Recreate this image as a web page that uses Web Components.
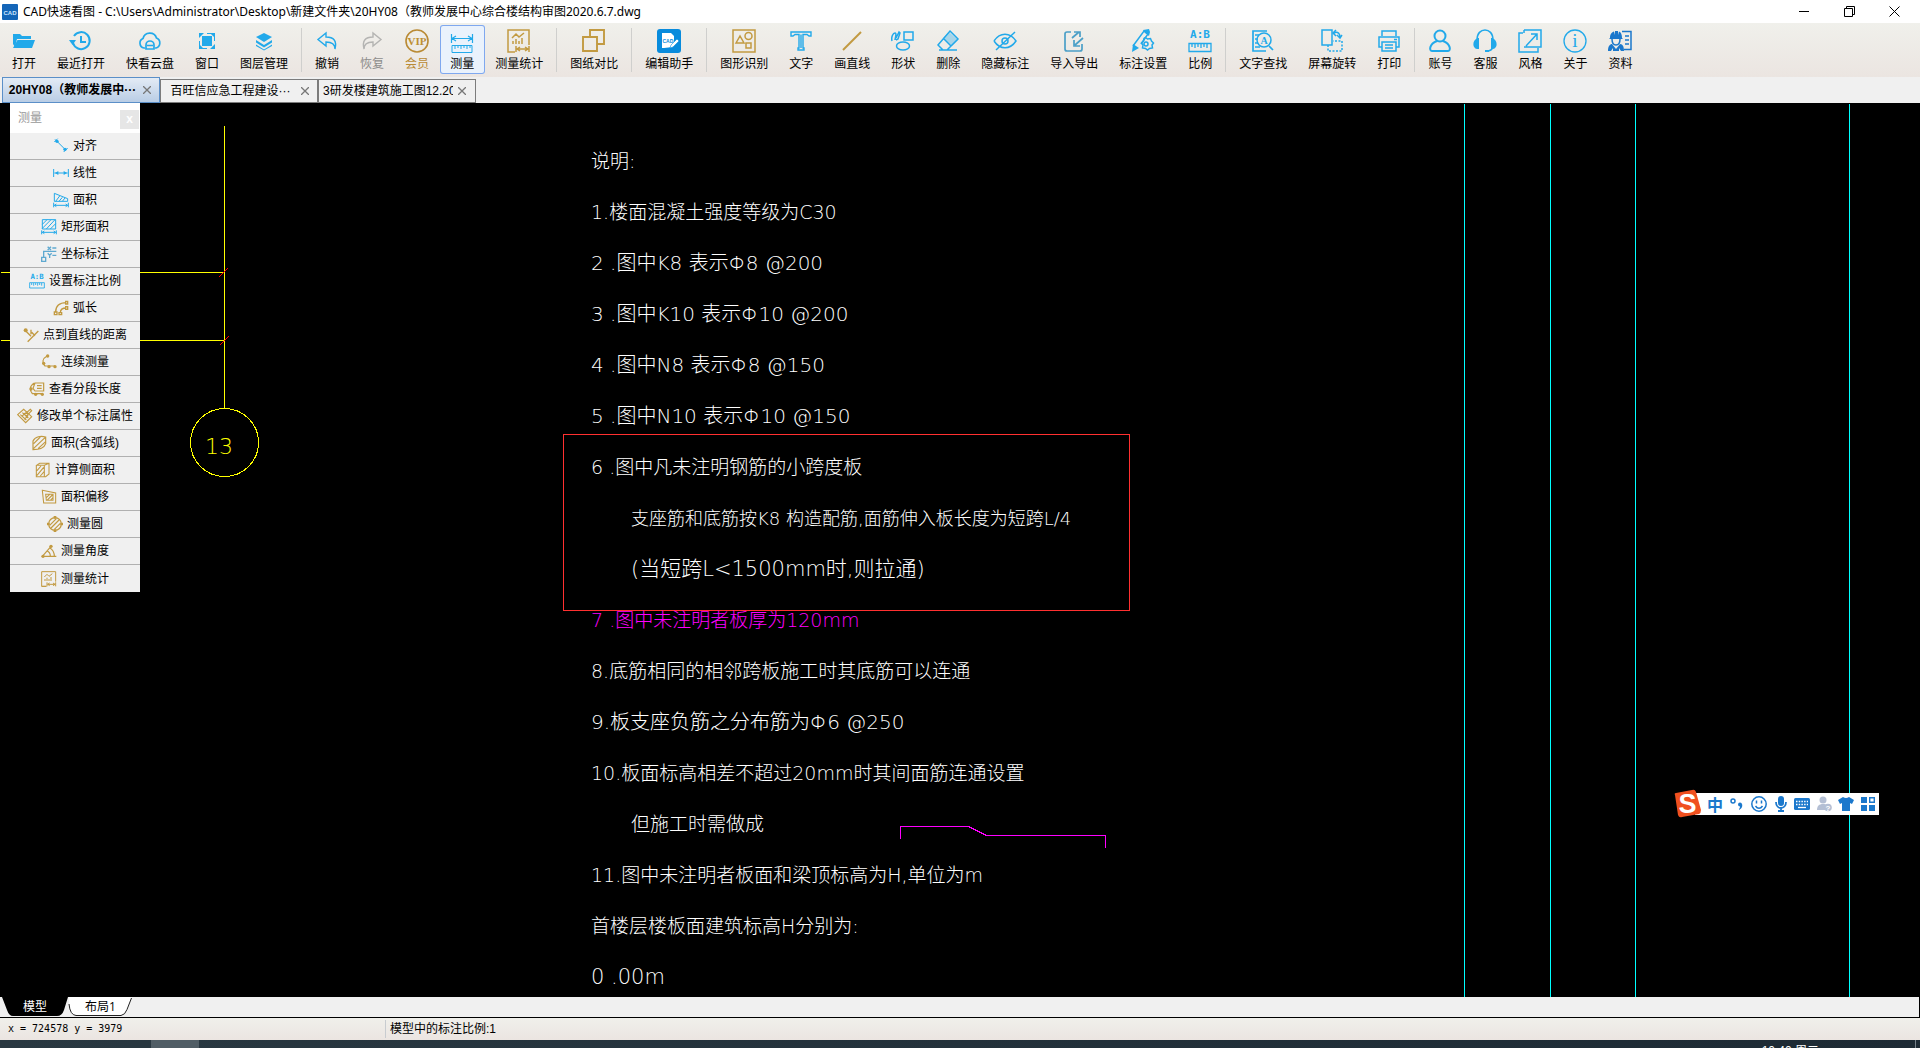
<!DOCTYPE html>
<html lang="zh-CN">
<head>
<meta charset="utf-8">
<title>CAD快速看图</title>
<style>
html,body{margin:0;height:100%;overflow:hidden}
body{font:12px/16px "Liberation Sans","Noto Sans CJK SC",sans-serif;color:#000}
</style>
</head>
<body>
<cad-app></cad-app>
<script>
const C='#22a9ea', G='#c29a41', B='#1b78cc';
const cy=(s,w=1.5)=>`<g fill="none" stroke="${C}" stroke-width="${w}">${s}</g>`;
const go=(s,w=1.5)=>`<g fill="none" stroke="${G}" stroke-width="${w}">${s}</g>`;
const stats=go('<path d="M8 23H1V1h21v15M1 23h7M9 17v6M22 17v6M10 20h11M13 18l-3 2 3 2M18 18l3 2-3 2"/><path d="M5 9l4-4 3 3 5-4M6 15v-3M9 15v-5M12 15v-3M15 15V9"/>');
const ruler=cy('<path d="M1 14.5h22v8H1zM4 15v3M7 15v4M10 15v3M13 15v4M16 15v3M19 15v4"/>',1.3);
const ICONS={
open:`<path fill="${C}" d="M1 5h7l2 2h9v3H5l-2 8-2-3z"/><path fill="${C}" d="M5.500 11H23l-3 8H1z"/>`,
recent:cy('<path d="M5 7a8.500 8.500 0 1 1-1 7M12 7v6h5" stroke-width="2"/>')+`<path fill="${C}" d="M0 11h7l-3.500 5z"/>`,
cloud:cy('<path d="M7 19H6a5 5 0 0 1-1-9.500A7 7 0 0 1 18.500 9 5.300 5.300 0 0 1 18 19h-1M8 20v-4a4 4 0 0 1 8 0v4zM9 16.500h6"/>',1.7),
window:`<path fill="${C}" d="M7 7h10v10H7z"/>`+cy('<path d="M4.500 4.500h15v15h-15z" stroke-width="1" stroke-dasharray="5 5" stroke-dashoffset="2.500"/>')+`<path fill="${C}" d="M4 4h5L7 6 6 7 4 9zM20 4h-5l3 3 2 2zM4 20h5l-3-3-2-2zM20 20h-5l3-3 2-2z"/>`,
layers:`<path fill="${C}" d="M12 4l8 4-8 5-8-5z"/>`+`<path fill="${C}" d="M4 11l8 5 8-5v2.500l-8 5-8-5zM4 15.500l8 5 8-5V17l-8 4.500L4 17z"/>`,
undo:cy('<path d="M10 4v4c8 0 11 4 9 12 0-5-3-7-9-7v4L2 10.500z" transform="translate(1 0)"/>',1.4),
redo:`<path fill="none" stroke="#b4b4b2" stroke-width="1.400" d="M13 4v4C5 8 2 12 4 20c0-5 3-7 9-7v4l8-6.500z"/>`,
vip:`<circle cx="12" cy="12" r="11" fill="none" stroke="#b98a34" stroke-width="1.600"/><text x="12" y="16" text-anchor="middle" font-family="Liberation Serif,serif" font-weight="700" font-size="11" fill="#bd8f33">VIP</text>`,
measure:cy('<path d="M1.500 5v9M22.500 5v9M2 9.500h20M6 7l-4 2.500L6 12M18 7l4 2.500-4 2.500"/><path d="M2 16.500h20v7H2zM5 17v3M8 17v2M11 17v3M14 17v2M17 17v3M20 17v2" stroke-width="1"/>',1.200),
stats,
compare:go('<path d="M8 8V1h14v14h-7M1 8h14v14H1z"/>',1.900),
edit:`<rect width="24" height="24" rx="3" fill="#088bdc"/><path fill="#fff" d="M5 4h9l3 3v4l-1 7-9 1H5z"/><text x="5.500" y="14" font-family="Liberation Sans,sans-serif" font-weight="700" font-size="5" fill="#088bdc">CAD</text><path d="M13 19l1-3 6-6 2 2-6 6z" fill="#fff" stroke="#088bdc" stroke-width=".6"/>`,
shapesrec:go('<path d="M1 1h22v22H1zM4 14l4-7 4 7zM14 14h5v5h-5z"/><circle cx="16.500" cy="7" r="3.500"/>'),
text:cy('<path d="M2 3h20v4h-2l-2-1.500h-4V19h1v2H9v-2h1V5.500H6L4 7H2zM12 5.500V19"/>',1.400),
line:go('<path d="M3 21L21 3"/>',2),
shape:cy('<path d="M13 3h9v8h-9zM1 12c-1-4 1-8 3-8s0 6 0 7M5 9l3-6 1 1-2 6-2 1"/><ellipse cx="12" cy="17" rx="6.500" ry="4"/>'),
erase:`<path fill="${C}" opacity=".35" d="M13 3l9 8-6 6-9-8z"/>`+cy('<path d="M14 2l8 8-11 11H7l-5-5zM7 9l8 8M3 21h18"/>'),
hide:cy('<path d="M1 12c6-9 16-9 22 0-6 9-16 9-22 0M3 21L22 3"/><circle cx="12" cy="12" r="3"/>'),
export:`<g fill="none" stroke="#4b9fc7" stroke-width="1.700"><path d="M9 3H5Q3 3 3 5v15q0 2 2 2h13q2 0 2-2v-5"/><path d="M10 9l7-6M12 3h6v5M21 9l-8 7M12 11v6h6"/></g>`,
mark:`<path fill="${C}" d="M12 1l6-1 1 3-1 4-4-3zM2 15l6 4-7 4z"/>`+cy('<path d="M2 17L13 2l4 3-7 10"/><path d="M15.500 9l2 1.500 3-.5 1 2.500 2 2-1.500 2 .5 3-3 .5-2 1.500-2-1.500-3-.5.500-3-1.500-2 2-2 .500-2.500z" transform="translate(-1 -.5)"/><circle cx="15" cy="15" r="2"/>'),
ratio:`<text x="12" y="9" text-anchor="middle" font-family="DejaVu Sans Mono,monospace" font-weight="700" font-size="11" fill="${C}">A:B</text>`+ruler,
find:cy('<path d="M15 22H2V2h14M4 6h4M4 10h3M4 14h3M4 18h5M18 17l4 4" stroke-width="1.700"/><circle cx="13" cy="11" r="7"/>')+`<text x="13" y="15" text-anchor="middle" font-family="Liberation Serif,serif" font-weight="700" font-size="10" fill="${C}">A</text>`,
rotate:cy('<path d="M2 1h10v15H2z"/><path d="M8 16v6h14V12h-9" stroke-dasharray="2 1.500"/><path d="M14 4c4-2 6 1 6 4M16 1l-3 3 3 3M17 6l3 3 2-3"/>'),
print:cy('<path d="M5 7V2h14v5M5 18H2V8h20v10h-3M5 13h14v9H5zM8 16h8M8 19h8M17 10.500h3"/>'),
user:cy('<circle cx="12" cy="7" r="5.500"/><path d="M9 12c-8 3-8 10-5 10h16c3 0 3-7-5-10"/>',2),
service:cy('<path d="M4 11C4 4 8 1 12 1s8 3 8 10M20 18c-1 3-4 4-6 4"/>')+`<path fill="${C}" d="M5 9h1v11H4c-5-1-5-9 1-11M19 9h-1v11h2c5-1 5-9-1-11M12 21h4v2h-4z"/>`,
style:cy('<path d="M5 4H1v19h19v-4M6 1h17v17H6M6 1v3M8 17L19 5M13 5h6v6"/>'),
about:cy('<circle cx="12" cy="12" r="11"/>',1.300)+`<text x="12" y="18" text-anchor="middle" font-family="Liberation Serif,serif" font-size="19" fill="${C}">i</text>`,
data:`<g fill="none" stroke="${B}" stroke-width="1.500"><path d="M14 2.500h9v18h-7M17 7h4M17 11h4M17 15h4"/><path d="M4 10c0 8 8 8 8 0"/></g><path fill="${B}" d="M2 9c0-4 2-6 4-6.500L7 6V2h3v4l1-3.500C13 3 14 6 14 9l1 1H1zM0 22c0-5 2-7 4-7l4 5 4-5c3 0 4 3 4 7h-3l-2-3v3H5v-3l-2 3z"/>`,
align:cy('<path d="M3 2L7 6M2 6l5-5M5 4l13 13M16 21l6-6" />')+`<circle cx="6" cy="5" r="2.500" fill="${C}"/><circle cx="18" cy="17" r="2.500" fill="${C}"/>`,
linear:cy('<path d="M1 6v12M23 6v12M2 12h20"/>')+`<path fill="${C}" d="M3 12l5-3v6zM21 12l-5-3v6z"/>`,
area:cy('<path d="M2 14V2l20 8v4zM4 14l6-8M9 14l5-6M14 14l4-5M1 16v7M23 16v7M2 20h20M5 18l-3 2 3 2M19 18l3 2-3 2"/>'),
rect:cy('<path d="M2 1h20v14H2zM2 8l7-7M2 14L15 1M8 15L21 1M14 15l8-8M1 17v6M23 17v6M2 20h20M5 18l-3 2 3 2M19 18l3 2-3 2"/>'),
coord:`<g fill="none" stroke="#5fa9d0" stroke-width="2"><path d="M1 17h6v6H1zM4 16V8h7M17 3h6M17 14h6M11 8h12M10 1l5 5M15 1l-5 5M10 11l3 3 3-3M13 14v4"/></g>`,
arc:go('<path d="M4 18C4 8 10 4 20 4M11 19c0-5 3-7 9-7M2 18h4v4H2zM9 19h4v3H9zM19 2h3v4h-3zM19 10h3v4h-3z"/>',2),
point:go('<path d="M3 5l9 9M7 22L23 6M12 4v7M13 8l5 5" />',2)+`<circle cx="4" cy="5" r="3" fill="${G}"/>`,
cont:go('<path d="M9 3C2 7 1 13 6 18h15"/>',1.800)+`<g fill="${G}"><circle cx="10" cy="3" r="2.500"/><circle cx="4" cy="14" r="2.500"/><circle cx="12" cy="19" r="2.500"/><circle cx="21" cy="19" r="2.500"/></g>`,
seg:go('<path d="M8 3C0 8 1 14 5 19h15M9 3h13v12H9l-3-4zM12 7h7M12 11h7"/>',1.800)+`<g fill="${G}"><circle cx="3" cy="12" r="2.500"/><circle cx="10" cy="20" r="2.500"/><circle cx="20" cy="20" r="2.500"/></g>`,
modify:go('<path d="M1 10L10 2l12 11-9 9zM5 10l9 8M8 7l9 8M11 10l9-8 2 2-9 9M7 13l6-6M11 17l6-6"/>',1.700),
arcarea:go('<path d="M3 22V9C6 2 15 1 22 3v10c-2 6-8 9-19 9zM4 13L14 3M4 20L21 4M11 20L22 10"/>',1.800),
side:go('<path d="M2 5l5-3h14v16l-5 4H2zM2 5h12v17M14 5l7-3M3 13l6-7M3 20L13 8M8 21l6-7"/>',1.600),
offset:go('<path d="M2 2l20 4v15H4zM7 8h11v9H8zM8 13l5-5M9 17l8-8M14 17l4-4"/>',1.600),
circle:go('<circle cx="12" cy="12" r="9.500"/><path d="M4 14L14 4M6 18L18 6M11 20l9-9"/>',1.800)+`<g fill="${G}"><path d="M10 0h4v4h-4zM10 20h4v4h-4zM0 10h4v4H0zM20 10h4v4h-4z"/></g>`,
angle:go('<path d="M2 20L15 5M2 20h21M13 7c5 3 7 7 7 13M9 12c3 1 5 4 5 8"/>',1.800)+`<g fill="${G}"><circle cx="3" cy="20" r="2.500"/><circle cx="15" cy="5" r="2.500"/></g>`
};
const define=(name,html)=>customElements.define(name,class extends HTMLElement{
  connectedCallback(){
    if(this.shadowRoot)return;
    const t=document.createElement('template');
    t.innerHTML=typeof html==='function'?html(this):html;
    this.attachShadow({mode:'open'}).append(t.content.cloneNode(true));
  }
});
const BTN='button{font:inherit;color:inherit;margin:0;padding:0;border:0;background:none}';

define('cad-icon',el=>`<style>:host{display:block;width:var(--icon,24px);height:var(--icon,24px);flex:none}svg{display:block;width:100%;height:100%}</style>
<svg viewBox="0 0 24 24" aria-hidden="true">${ICONS[el.getAttribute('name')]}</svg>`);

define('tool-button',el=>`<style>:host{display:block;height:50px}${BTN}
button{display:flex;flex-direction:column;align-items:center;gap:1px;height:49px;padding:4px 11px 0 10px;white-space:nowrap}
:host([active]) button{background:#eaf2fc;border-radius:3px;box-shadow:inset 0 0 0 1px #7fa8ef}
:host([disabled]) button{color:#8d8d8b}
:host([gold]) button{color:#b98a34}
span{line-height:20px}</style>
<button type="button"><cad-icon name="${el.getAttribute('icon')}"></cad-icon><span><slot></slot></span></button>`);

define('tool-separator','<style>:host{display:block;width:1px;height:44px;margin:3px 3px 0 2px;background:#cfcfcd}</style>');

define('title-bar',`<style>:host{display:flex;align-items:center;height:23px;background:#fff;padding:0 3px 0 2px;font:12px/18px "Noto Sans","Noto Sans CJK SC",sans-serif}
.logo{width:16px;height:16px;margin-right:5px}
h1{font:inherit;margin:0;flex:1;white-space:nowrap}
${BTN}button{width:45px;height:20px;display:flex;align-items:center;justify-content:center}
button svg{width:11px;height:11px;fill:none;stroke:#000}</style>
<svg class="logo" viewBox="0 0 16 16"><rect width="16" height="16" rx="1" fill="#1466b8"/><text x="8" y="11" text-anchor="middle" font-family="Liberation Sans,sans-serif" font-weight="700" font-size="6" fill="#cfe6ff">CAD</text></svg>
<h1><slot></slot></h1>
<button type="button" aria-label="最小化"><svg><path d="M0 5.500h10"/></svg></button>
<button type="button" aria-label="还原"><svg><path d="M.5 2.500h8v8h-8zM2.500 2.500v-2h8v8h-2"/></svg></button>
<button type="button" aria-label="关闭"><svg><path d="M.5.500l10 10M10.500.500l-10 10"/></svg></button>`);

define('tool-bar',`<style>:host{display:flex;height:52px;padding:2px 0 0 2px;background:linear-gradient(#f0f0eb,#ebe5e1)}</style><slot></slot>`);

define('file-tab',`<style>:host{display:flex;align-items:center;box-sizing:border-box;width:158px;height:24px;border:1px solid #7c7c7c;background:#f0f0f0;padding:0 3px 0 4px}
:host([active]){height:26px;border-color:#5b8fc8;background:linear-gradient(#e3ebf5,#b9cde5);font-weight:700}
${BTN}.name{flex:1;min-width:0;overflow:hidden;white-space:nowrap;text-align:center}
:host([clip]) .name{text-align:left;flex:none;width:130px}
.x{width:18px;height:18px;flex:none;display:flex;align-items:center;justify-content:center}
svg{width:8px;height:8px;stroke:#777;stroke-width:1.300}</style>
<button type="button" class="name"><slot></slot></button><button type="button" class="x" aria-label="关闭标签"><svg><path d="M0 0l8 8M8 0L0 8"/></svg></button>`);

define('file-tabs','<style>:host{display:flex;align-items:flex-end;height:26px;padding-left:2px;background:#f0f0f0}</style><slot></slot>');

define('measure-item',el=>`<style>:host{display:block;height:27px;--icon:16px}${BTN}
button{display:flex;align-items:center;justify-content:center;gap:4px;box-sizing:border-box;width:100%;height:27px;border-bottom:1px solid #b0b0b0;background:#f0f0f0;white-space:nowrap}
:host(:last-child) button{border-bottom:0}</style>
<button type="button"><cad-icon name="${el.getAttribute('icon')}"></cad-icon><slot></slot></button>`);

define('measure-panel',`<style>:host{display:block;width:130px;background:#f0f0f0}
header{display:flex;justify-content:space-between;height:30px;background:#fff;color:#999;padding:0 1px 0 8px;line-height:30px;box-sizing:border-box}
${BTN}header button{width:19px;height:19px;margin-top:7px;background:#e6e6e6;color:#fff;font-weight:700;line-height:17px}</style>
<header><span>测量</span><button type="button">x</button></header><slot></slot>`);

define('cad-note',`<style>:host{display:block;height:51px;line-height:51px;white-space:pre;font-size:19px}
:host([size=wide]){font-size:20px}:host([size=xwide]){font-size:21px}:host([size=snug]){font-size:18px}
:host([indent]){padding-left:40px}:host([magenta]){color:#f0f}</style><slot></slot>`);

define('cad-canvas',`<style>:host{display:block;position:relative;flex:1;min-height:0;overflow:hidden;background:#000;color:#fff}
svg.draw{position:absolute;inset:0;width:100%;height:100%;fill:none;shape-rendering:crispEdges}
.notes{position:relative;padding:33px 0 0 591px;font-family:"DejaVu Sans","Noto Sans CJK SC",sans-serif;font-weight:200}
.axis{font:200 22px "DejaVu Sans",sans-serif;fill:#ff0}
::slotted(measure-panel){position:absolute;left:10px;top:0;color:#000}
::slotted(ime-bar){position:absolute;left:1672px;top:686px}</style>
<svg class="draw">
<g stroke="#0ff"><path d="M1464.500 1v1999M1550.500 1v1999M1635.500 1v1999M1849.500 1v1999"/></g>
<g stroke="#ff0"><path d="M224.500 23v282M1 169.500h223M1 237.500h223"/><circle cx="224.500" cy="339.500" r="34" /></g>
<text class="axis" x="205" y="351">13</text>
<path stroke="#f00" d="M219 174l9-9M220 242l9-9"/>
<path stroke="#ff3030" d="M563.500 331.500h566v176h-566z"/>
<path stroke="#f0f" d="M900.500 736v-12.500h68l18 9h118.500V745"/>
</svg>
<div class="notes"><slot name="note"></slot></div><slot></slot>`);

define('ime-bar',`<style>:host{display:flex;align-items:center;height:30px}
.s{width:30px;height:30px;z-index:1}
.b{display:flex;align-items:center;justify-content:space-around;width:184px;height:22px;background:#fff;margin-left:-7px;padding:0 0 0 9px;box-sizing:border-box;color:#1b78cc}
${BTN}button{width:20px;height:20px;display:flex;align-items:center;justify-content:center;font:700 16px/20px "Noto Sans CJK SC",sans-serif}
button svg{width:16px;height:16px}</style>
<svg class="s" viewBox="0 0 30 30"><path fill="#f0501f" d="M3 6Q2 4 4 4L20 1q3-1 4 2l5 18q0 3-2 4L10 28q-3 1-4-2z"/><text x="15.500" y="24" text-anchor="middle" font-family="Liberation Sans,sans-serif" font-weight="700" font-size="27" fill="#fff">S</text></svg>
<div class="b">
<button type="button">中</button>
<button type="button" aria-label="标点"><svg viewBox="0 0 16 16"><circle cx="4" cy="5" r="2" fill="none" stroke="#1b78cc" stroke-width="1.500"/><circle cx="11" cy="8.500" r="2" fill="#1b78cc"/><path fill="#1b78cc" d="M13 8c1 3-1 5-3 6v-1c1-1 1-2 1-4z"/></svg></button>
<button type="button" aria-label="表情"><svg viewBox="0 0 16 16" fill="none" stroke="#1b78cc" stroke-width="1.500"><circle cx="8" cy="8" r="7.200"/><path d="M5.500 4.500v3M10.500 4.500v3M4.500 10c2 3 5 3 7 0"/></svg></button>
<button type="button" aria-label="语音"><svg viewBox="0 0 16 16"><rect x="5" width="6" height="10" rx="3" fill="#1b78cc"/><path d="M3 6c0 8 10 8 10 0M8 12v3M5 15h6" fill="none" stroke="#1b78cc" stroke-width="1.800"/></svg></button>
<button type="button" aria-label="键盘"><svg viewBox="0 0 16 16"><rect y="2" width="16" height="12" rx="1.500" fill="#1b78cc"/><path d="M2 5.500h12M2 8.500h12" stroke="#fff" stroke-width="1.500" stroke-dasharray="1.500 1.200"/><path d="M4 11.500h8" stroke="#fff" stroke-width="1.300"/></svg></button>
<button type="button" aria-label="用户"><svg viewBox="0 0 16 16"><circle cx="7" cy="4" r="3.500" fill="#b4bfd4"/><path fill="#b4bfd4" d="M1 14c0-4 2-6 6-6s4 2 4 3v3z"/><circle cx="12" cy="11.500" r="3.800" fill="#b4bfd4"/><text x="12" y="14.500" text-anchor="middle" font-size="8" font-family="Liberation Sans,sans-serif" font-weight="700" fill="#fff">?</text></svg></button>
<button type="button" aria-label="皮肤"><svg viewBox="0 0 16 16"><path fill="#1b78cc" d="M5 1q3 2 6 0l5 3-2 4-2-1v8H4V7L2 8 0 4z"/></svg></button>
<button type="button" aria-label="工具箱"><svg viewBox="0 0 16 16"><path fill="#1b78cc" d="M1 1h6v6H1zM1 9h6v6H1zM9 9h6v6H9z"/><path fill="none" stroke="#1b78cc" stroke-width="1.400" d="M9.700 1.700h4.600v4.600H9.700z"/></svg></button>
</div>`);

define('layout-tabs',`<style>:host{display:flex;height:20px;background:#f0f0f0;border-bottom:1px solid #000;border-right:1px solid #000;padding-left:2px;font:12px/16px "Open Sans","Noto Sans CJK SC",sans-serif}
${BTN}button{height:19px;display:grid;place-items:center}
button>*{grid-area:1/1}svg{height:19px;display:block}span{z-index:1}
.m{width:66px;color:#fff}.l{width:65px}.m svg{width:66px}.l svg{width:65px}</style>
<button type="button" class="m"><svg><path d="M0 0h66l-4 13q-2 6-7 6H11q-4 0-6-6z"/></svg><span>模型</span></button>
<button type="button" class="l"><svg><path d="M.5 0L2 12q2 6 6 6.500h45q4-.5 6-6L63.500 1V0z" fill="#fff"/><path d="M1 7q1 11 7 11.500h45q4-.5 6-6L63.500 1" fill="none" stroke="#222"/></svg><span>布局1</span></button>`);

define('status-bar',`<style>:host{display:flex;align-items:center;height:22px;background:linear-gradient(#f0f0eb,#ebe5e1);padding-left:8px}
.c{font:10px/18px "DejaVu Sans Mono",monospace;white-space:pre;width:377px;border-right:1px solid #c8ccd0;margin-right:4px}</style>
<span class="c">x = 724578 y = 3979</span><span>模型中的标注比例:1</span>`);

define('task-bar',`<style>:host{display:flex;height:8px;overflow:hidden;background:linear-gradient(90deg,#293841,#1d2a34);color:#fff;padding:0 4px 0 151px;justify-content:space-between}
i{width:48px;background:#505d65}
div{display:flex;gap:96px}
b{display:block;width:1px;height:8px;background:#76818a}
span{padding-top:3px;white-space:nowrap}</style>
<i></i><div><span>10:40 周二</span><b></b></div>`);

const tools=[['open','打开'],['recent','最近打开'],['cloud','快看云盘'],['window','窗口'],['layers','图层管理'],0,['undo','撤销'],['redo','恢复','disabled'],['vip','会员','gold'],['measure','测量','active'],['stats','测量统计'],0,['compare','图纸对比'],0,['edit','编辑助手'],0,['shapesrec','图形识别'],['text','文字'],['line','画直线'],['shape','形状'],['erase','删除'],['hide','隐藏标注'],['export','导入导出'],['mark','标注设置'],['ratio','比例'],0,['find','文字查找'],['rotate','屏幕旋转'],['print','打印'],0,['user','账号'],['service','客服'],['style','风格'],['about','关于'],['data','资料']];
const items=[['align','对齐'],['linear','线性'],['area','面积'],['rect','矩形面积'],['coord','坐标标注'],['ratio','设置标注比例'],['arc','弧长'],['point','点到直线的距离'],['cont','连续测量'],['seg','查看分段长度'],['modify','修改单个标注属性'],['arcarea','面积(含弧线)'],['side','计算侧面积'],['offset','面积偏移'],['circle','测量圆'],['angle','测量角度'],['stats','测量统计']];
const notes=[['说明:'],['1.楼面混凝土强度等级为C30'],['2 .图中K8 表示Φ8 @200','size=wide'],['3 .图中K10 表示Φ10 @200','size=wide'],['4 .图中N8 表示Φ8 @150','size=wide'],['5 .图中N10 表示Φ10 @150','size=wide'],['6 .图中凡未注明钢筋的小跨度板'],['支座筋和底筋按K8 构造配筋,面筋伸入板长度为短跨L/4','size=snug indent'],['(当短跨L&lt;1500mm时,则拉通)','size=xwide indent'],['7 .图中未注明者板厚为120mm','magenta'],['8.底筋相同的相邻跨板施工时其底筋可以连通'],['9.板支座负筋之分布筋为Φ6 @250','size=wide'],['10.板面标高相差不超过20mm时其间面筋连通设置'],['但施工时需做成','indent'],['11.图中未注明者板面和梁顶标高为H,单位为m'],['首楼层楼板面建筑标高H分别为:'],['0 .00m','size=xwide']];

define('cad-app',`<style>:host{display:flex;flex-direction:column;height:100vh;overflow:hidden}
title-bar,tool-bar,file-tabs,layout-tabs,status-bar,task-bar{flex-shrink:0;box-sizing:border-box}
title-bar{height:23px}tool-bar{height:54px}file-tabs{height:26px}layout-tabs{height:21px}status-bar{height:22px}task-bar{height:8px}</style>
<title-bar>CAD快速看图 - C:\\Users\\Administrator\\Desktop\\新建文件夹\\20HY08（教师发展中心综合楼结构审图2020.6.7.dwg</title-bar>
<tool-bar>${tools.map(t=>t?`<tool-button icon="${t[0]}" ${t[2]||''}>${t[1]}</tool-button>`:'<tool-separator></tool-separator>').join('')}</tool-bar>
<file-tabs><file-tab active>20HY08（教师发展中···</file-tab><file-tab>百旺信应急工程建设···</file-tab><file-tab clip>3研发楼建筑施工图12.20</file-tab></file-tabs>
<cad-canvas>${notes.map(n=>`<cad-note slot="note" ${n[1]||''}>${n[0]}</cad-note>`).join('')}
<measure-panel>${items.map(i=>`<measure-item icon="${i[0]}">${i[1]}</measure-item>`).join('')}</measure-panel>
<ime-bar></ime-bar></cad-canvas>
<layout-tabs></layout-tabs><status-bar></status-bar><task-bar></task-bar>`);
</script>
</body>
</html>
